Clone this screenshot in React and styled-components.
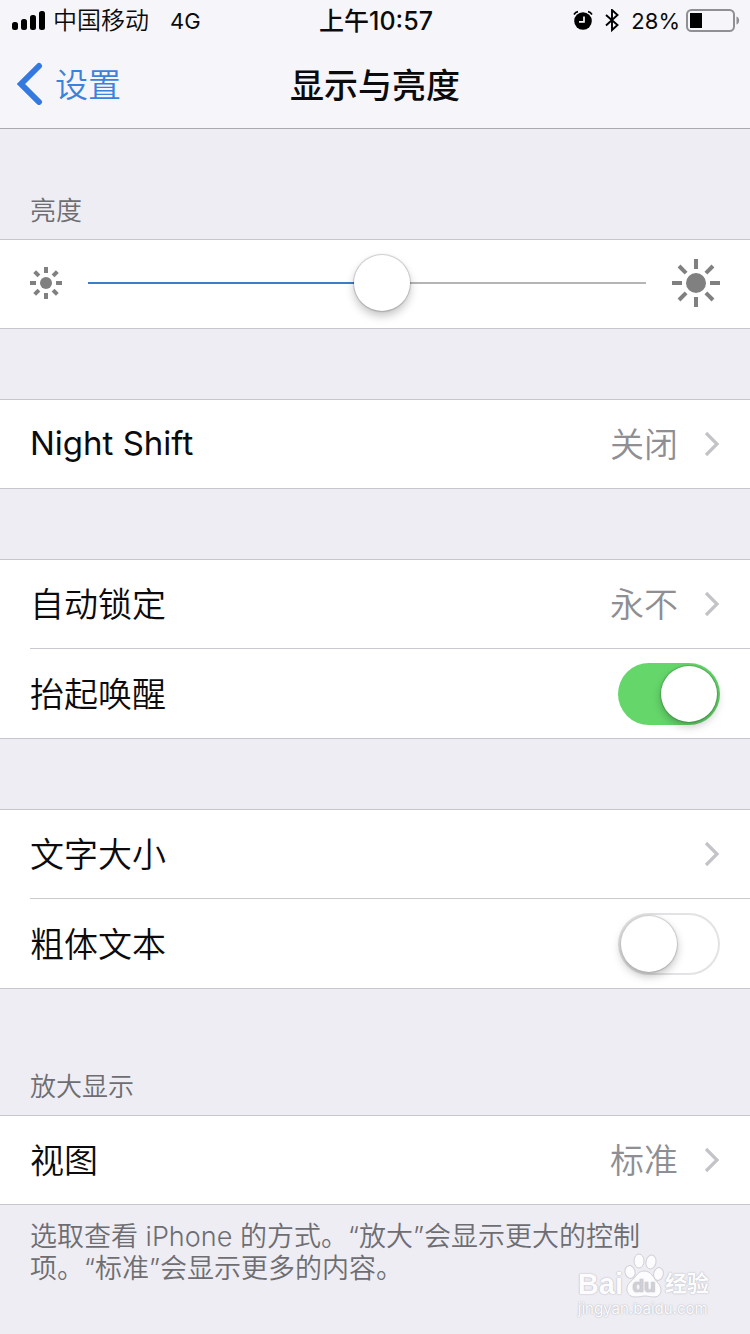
import { useState } from 'react';
import styled, { createGlobalStyle } from 'styled-components';

const GlobalStyle = createGlobalStyle`
  * {
    box-sizing: border-box;
  }
  body {
    margin: 0;
    background: #eeedf3;
    color: #0b0b0d;
    font-family: Inter, "Noto Sans CJK SC", sans-serif;
    font-size: 34px;
  }
`;

const Page = styled.div`
  position: relative;
  min-height: 100vh;
  overflow: hidden;
`;

const Header = styled.header`
  background: #f6f6fa;
  border-bottom: 1px solid #a9a9b0;
`;

const StatusBar = styled.div`
  display: grid;
  grid-template-columns: 1fr auto 1fr;
  align-items: center;
  height: 42px;
  padding: 0 10px 0 12px;
  font-size: 24px;
  font-weight: 350;
  line-height: 42px;
`;

const StatusSide = styled.div`
  display: flex;
  align-items: center;
  justify-content: ${props => props.$end ? 'flex-end' : 'flex-start'};
  gap: ${props => props.$gap}px;
`;

const Clock = styled.time`
  font-size: 25px;
  font-weight: 500;
`;

const Small = styled.span`
  font-size: 22px;
  font-weight: 400;
`;

const Network = styled(Small)`
  margin-left: 14px;
`;

const NavBar = styled.nav`
  display: grid;
  grid-template-columns: 1fr auto 1fr;
  align-items: center;
  height: 86px;
  padding: 0 16px 4px;
`;

const Back = styled.a`
  display: flex;
  align-items: center;
  gap: 11px;
  color: #3b82dc;
  font-size: 33px;
  font-weight: 350;
  text-decoration: none;
`;

const Title = styled.h1`
  margin: 0;
  font-size: 34px;
  font-weight: 500;
`;

const SectionTitle = styled.h2`
  margin: 0;
  padding: ${props => props.$first ? 63 : 79}px 30px 9px;
  color: #6d6d72;
  font-size: 26px;
  font-weight: 350;
  line-height: 38px;
`;

const Group = styled.section`
  margin-top: ${props => props.$spaced ? 70 : 0}px;
  background: #fff;
  border-top: 1px solid #c6c6cb;
  border-bottom: 1px solid #c6c6cb;
`;

const Row = styled.div`
  display: flex;
  align-items: center;
  height: 88px;
  margin-left: 30px;
  padding-right: 30px;
  color: inherit;
  text-decoration: none;
  & + & {
    height: 90px;
    border-top: 1px solid #c9c9ce;
  }
`;

const RowLabel = styled.span`
  flex: 1;
  padding-bottom: 3px;
  font-size: ${props => props.lang === 'en' ? 33 : 34}px;
  font-weight: ${props => props.lang === 'en' ? 400 : 350};
`;

const RowValue = styled.span`
  margin-right: 26px;
  padding-bottom: 4px;
  color: #8e8e93;
  font-weight: 350;
`;

const SliderRow = styled(Row)`
  gap: 26px;
  padding-bottom: 2px;
`;

const Slider = styled.input`
  flex: 1;
  min-width: 0;
  height: 56px;
  margin: 0;
  appearance: none;
  background: linear-gradient(#b5b5b7, #b5b5b7) center / 100% 2px no-repeat;
  background-image: ${props => `linear-gradient(to right, #3d7fc4 ${props.value}%, #b5b5b7 ${props.value}%)`};
  &::-webkit-slider-thumb {
    appearance: none;
    width: 56px;
    height: 56px;
    border-radius: 50%;
    background: #fff;
    box-shadow: 0 0 1px 1px rgba(0, 0, 0, 0.18), 0 5px 10px rgba(0, 0, 0, 0.24);
  }
`;

const Switch = styled.input`
  appearance: none;
  width: 102px;
  height: 62px;
  margin: 0;
  padding: 3px;
  border-radius: 31px;
  background: #fff;
  box-shadow: inset 0 0 0 2px #e3e3e5;
  &::before {
    content: '';
    display: block;
    width: 56px;
    height: 56px;
    border-radius: 50%;
    background: #fff;
    box-shadow: 0 0 1px 1px rgba(0, 0, 0, 0.16), 0 4px 10px rgba(0, 0, 0, 0.26);
  }
  &:checked {
    padding-left: 43px;
    background: #65d76a;
    box-shadow: none;
  }
`;

const Note = styled.p`
  max-width: 710px;
  margin: 0;
  padding: 16px 30px 50px;
  color: #6d6d72;
  font-size: 27px;
  font-weight: 350;
  line-height: 32px;
`;

const Watermark = styled.div`
  position: absolute;
  right: 41px;
  bottom: 16px;
  color: #fcfcfe;
  font-family: "Liberation Sans", "Noto Sans CJK SC", sans-serif;
  font-weight: 700;
  text-shadow: 0 0 1px #b4b4bc, 0 0 2px #c4c4ca;
`;

const Brand = styled.div`
  display: flex;
  align-items: flex-end;
  font-size: 29px;
  line-height: 30px;
`;

const BrandName = styled.span`
  font-size: 22px;
`;

const Domain = styled.div`
  font-family: Inter, sans-serif;
  font-size: 15px;
  font-weight: 400;
  line-height: 20px;
`;

const SignalIcon = () => (
  <svg width="34" height="22" viewBox="0 0 34 22" aria-hidden="true">
    <rect x="0" y="12" width="6" height="8" rx="2.500" />
    <rect x="9" y="9" width="6" height="11" rx="2.500" />
    <rect x="18" y="5" width="6" height="15" rx="2.500" />
    <rect x="27" y="1" width="6" height="19" rx="2.500" />
  </svg>
);

const AlarmIcon = () => (
  <svg width="20" height="22" viewBox="0 0 20 22" aria-hidden="true">
    <circle cx="10" cy="11" r="8.800" />
    <path d="M1 4.500C2 2.800 3.400 1.800 5 1.600M19 4.500C18 2.800 16.600 1.800 15 1.600" fill="none" stroke="#000" strokeWidth="1.600" />
    <path d="M11 6.500V11.800H6" fill="none" stroke="#f6f6fa" strokeWidth="1.700" />
  </svg>
);

const BluetoothIcon = () => (
  <svg width="14" height="24" viewBox="0 0 14 24" aria-hidden="true">
    <path d="M1 6L12.500 16L7 21V1L12.500 6L1 16.500" fill="none" stroke="#000" strokeWidth="1.900" />
  </svg>
);

const BatteryIcon = () => (
  <svg width="54" height="24" viewBox="0 0 54 24" aria-hidden="true">
    <rect x="1" y="1" width="47" height="21" rx="4.500" fill="none" stroke="#909094" strokeWidth="2" />
    <rect x="4" y="4" width="12" height="15" />
    <path d="M50.500 7.500V15.500C54 14.500 54 8.500 50.500 7.500Z" fill="#909094" />
  </svg>
);

const BackIcon = () => (
  <svg width="28" height="44" viewBox="0 0 28 44" aria-hidden="true">
    <path d="M23 5L5 23L23 41" fill="none" stroke="#3479e0" strokeWidth="6" strokeLinecap="round" strokeLinejoin="miter" />
  </svg>
);

const Chevron = () => (
  <svg width="16" height="26" viewBox="0 0 16 26" aria-hidden="true">
    <path d="M2 2L13 13L2 24" fill="none" stroke="#c3c3c8" strokeWidth="3.200" />
  </svg>
);

const rays = [0, 45, 90, 135, 180, 225, 270, 315];

const SunIcon = ({ size, radius, ray, thickness }) => (
  <svg width={size} height={size} viewBox={`${-size / 2} ${-size / 2} ${size} ${size}`} aria-hidden="true">
    <circle r={radius} fill="#808080" />
    {rays.map(angle => (
      <rect
        key={angle}
        x={-thickness / 2}
        y={-size / 2}
        width={thickness}
        height={ray}
        fill="#808080"
        transform={`rotate(${angle})`}
      />
    ))}
  </svg>
);

const PawIcon = () => (
  <svg width="42" height="46" viewBox="0 0 42 46" aria-hidden="true">
    <g fill="#fcfcfe" stroke="#d0d0d6" strokeWidth="1">
      <ellipse cx="7" cy="19" rx="5" ry="6.500" transform="rotate(-12 7 19)" />
      <ellipse cx="16" cy="8" rx="5" ry="7" />
      <ellipse cx="28" cy="9" rx="5" ry="7" transform="rotate(12 28 9)" />
      <ellipse cx="35.500" cy="21" rx="4.800" ry="6.500" transform="rotate(12 35.500 21)" />
      <path d="M21 18C14 18 13 25 7 29C1 35 4 44 12 44C17 44 19 43 22 43C25 43 27 44 32 44C40 43 39 34 35 30C30 25 29 18 21 18Z" />
    </g>
    <text x="21" y="39" textAnchor="middle" fontSize="19" fill="#d0d0d6">du</text>
  </svg>
);

const LinkRow = ({ label, value, lang }) => (
  <Row as="a" href="#">
    <RowLabel lang={lang}>{label}</RowLabel>
    {value && <RowValue>{value}</RowValue>}
    <Chevron />
  </Row>
);

const SwitchRow = ({ id, label, on }) => {
  const [checked, setChecked] = useState(on);

  return (
    <Row>
      <RowLabel as="label" htmlFor={id}>{label}</RowLabel>
      <Switch
        id={id}
        type="checkbox"
        role="switch"
        checked={checked}
        onChange={() => setChecked(!checked)}
      />
    </Row>
  );
};

const App = () => {
  const [brightness, setBrightness] = useState(53);

  return (
    <Page>
      <GlobalStyle />
      <Header>
        <StatusBar>
          <StatusSide $gap={7}>
            <SignalIcon />
            <span>中国移动</span>
            <Network>4G</Network>
          </StatusSide>
          <Clock>上午10:57</Clock>
          <StatusSide $end $gap={12}>
            <AlarmIcon />
            <BluetoothIcon />
            <StatusSide $gap={6}>
              <Small>28%</Small>
              <BatteryIcon />
            </StatusSide>
          </StatusSide>
        </StatusBar>
        <NavBar>
          <Back href="#"><BackIcon />设置</Back>
          <Title>显示与亮度</Title>
        </NavBar>
      </Header>
      <main>
        <SectionTitle $first id="brightness-title">亮度</SectionTitle>
        <Group>
          <SliderRow>
            <SunIcon size={32} radius={6} ray={6} thickness={4} />
            <Slider
              type="range"
              aria-labelledby="brightness-title"
              value={brightness}
              onChange={e => setBrightness(e.target.value)}
            />
            <SunIcon size={48} radius={10} ray={10} thickness={4} />
          </SliderRow>
        </Group>
        <Group $spaced>
          <LinkRow lang="en" label="Night Shift" value="关闭" />
        </Group>
        <Group $spaced>
          <LinkRow label="自动锁定" value="永不" />
          <SwitchRow id="raise" label="抬起唤醒" on />
        </Group>
        <Group $spaced>
          <LinkRow label="文字大小" />
          <SwitchRow id="bold" label="粗体文本" on={false} />
        </Group>
        <SectionTitle>放大显示</SectionTitle>
        <Group>
          <LinkRow label="视图" value="标准" />
        </Group>
        <Note>选取查看 iPhone 的方式。“放大”会显示更大的控制项。“标准”会显示更多的内容。</Note>
      </main>
      <Watermark>
        <Brand>
          Bai
          <PawIcon />
          <BrandName>经验</BrandName>
        </Brand>
        <Domain>jingyan.baidu.com</Domain>
      </Watermark>
    </Page>
  );
};

export default App;
